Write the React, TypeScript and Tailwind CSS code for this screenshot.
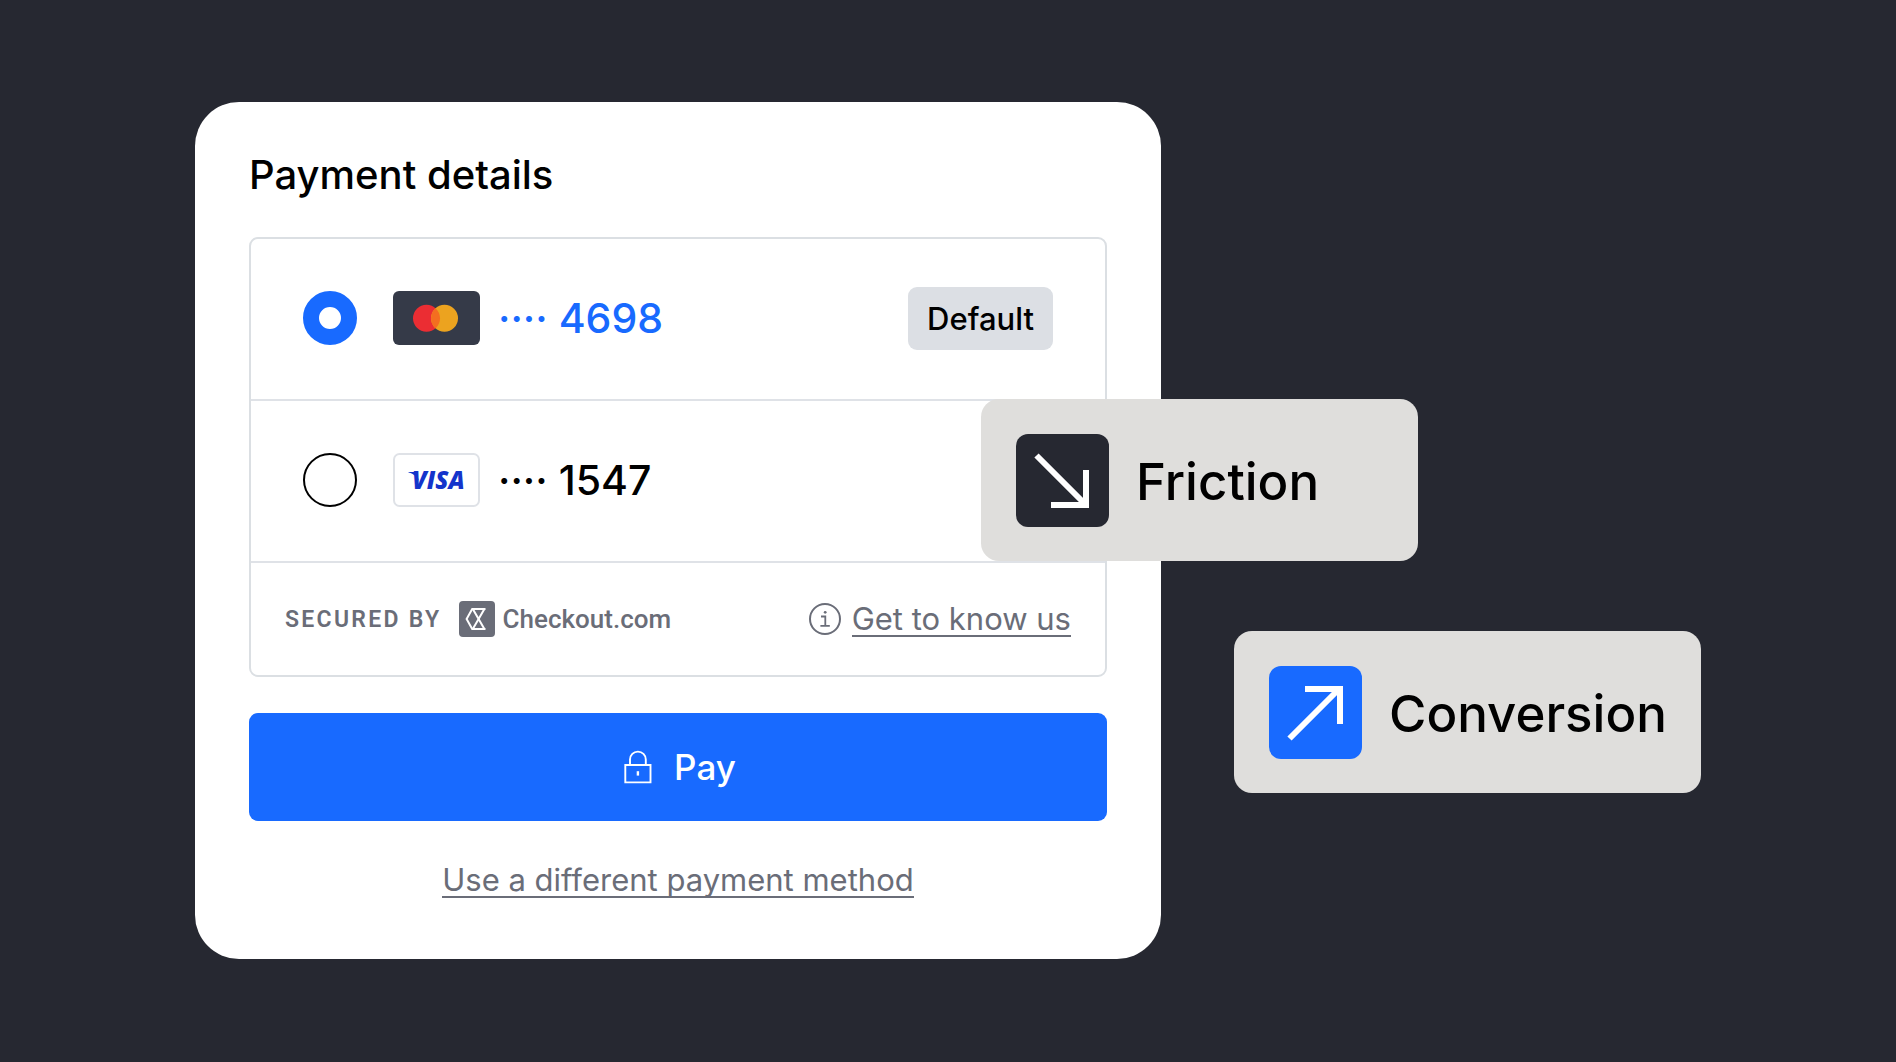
import { useState, type ReactNode } from 'react';

const CARDS = [
  { id: 'mastercard', last4: '4698', isDefault: true },
  { id: 'visa', last4: '1547', isDefault: false },
];

function MastercardLogo() {
  return (
    <svg viewBox="0 0 87 54" className="h-[54px] w-[87px]" role="img" aria-label="Mastercard">
      <rect width="87" height="54" rx="6" fill="#353a48" />
      <circle cx="33.5" cy="27.3" r="13.5" fill="#eb2d33" />
      <circle cx="51.5" cy="27.3" r="13.5" fill="#eca31f" />
      <path d="M42.5 17.2a13.5 13.5 0 0 1 0 20.2a13.5 13.5 0 0 1 0-20.2z" fill="#f46e20" />
    </svg>
  );
}

function VisaLogo() {
  return (
    <svg viewBox="0 0 87 54" className="h-[54px] w-[87px]">
      <rect x="1" y="1" width="85" height="52" rx="5.5" fill="#fff" stroke="#dfe2e7" strokeWidth="2" />
      <path d="M15.5 19H23l3 9c-2-4.5-5-7-10.5-8.5z" fill="#1434cb" />
      <text x="19" y="36" fill="#1434cb" className="font-['Open_Sans',sans-serif] text-[24px] font-extrabold italic">
        VISA
      </text>
    </svg>
  );
}

function CheckoutMark() {
  return (
    <svg viewBox="0 0 36 36" className="size-9" fill="none" aria-hidden="true">
      <rect width="36" height="36" rx="4" fill="#6a6d78" />
      <g stroke="#fff" strokeWidth="2">
        <path d="M26.5 8H13.2L7.6 18l5.6 10h13.3" />
        <path d="M13.8 8l11.6 20M13.8 28L25.4 8" />
      </g>
    </svg>
  );
}

function InfoIcon() {
  return (
    <svg viewBox="0 0 32 32" className="size-8" fill="none" stroke="currentColor" aria-hidden="true">
      <circle cx="16" cy="16" r="15" strokeWidth="2" />
      <path d="M12 13.5h4.3v9M11.4 22.8h9.4" strokeWidth="1.8" />
      <circle cx="16.2" cy="9.3" r="1.4" fill="currentColor" stroke="none" />
    </svg>
  );
}

function LockIcon() {
  return (
    <svg viewBox="0 0 28 34" className="h-[34px] w-7" fill="none" stroke="currentColor" strokeWidth="1.9" aria-hidden="true">
      <path d="M1.3 15h25.2v17.4H1.3zM6 15V9.5a7.8 7.8 0 0 1 15.8 0V15" />
      <path d="M13.9 21.2v4.4" strokeWidth="2.4" />
    </svg>
  );
}

function Tag({ className, tile, arrow, children }: { className: string; tile: string; arrow: string; children: ReactNode }) {
  return (
    <div className={`flex h-[162px] items-center gap-[27px] rounded-[18px] bg-[#dfdedc] pl-[35px] ${className}`}>
      <svg viewBox="0 0 93 93" className={`size-[93px] rounded-xl ${tile}`} fill="none" stroke="#fff" strokeWidth="6" aria-hidden="true">
        <path d={arrow} />
      </svg>
      <span className="pt-0.5 text-[51px] leading-none font-medium text-black">{children}</span>
    </div>
  );
}

export default function App() {
  const [selected, setSelected] = useState('mastercard');

  return (
    <main className="flex min-h-screen items-start justify-center bg-[#262831] py-[102px] font-['Inter',sans-serif]">
      <div className="flex w-full max-w-[1506px]">
        <section className="min-w-0 flex-1 rounded-[44px] bg-white px-[54px] pt-[48px] pb-[61px]">
          <h1 className="text-[40px] leading-[50px] font-medium text-black">Payment details</h1>

          <div className="mt-[37px] divide-y-2 divide-[#dfe2e7] rounded-[9px] border-2 border-[#dbdfe3]">
            {CARDS.map((card) => (
              <label key={card.id} className="flex h-[162px] items-center px-[52px] pb-0.5">
                <input
                  type="radio"
                  name="card"
                  checked={selected === card.id}
                  onChange={() => setSelected(card.id)}
                  className="size-[54px] shrink-0 appearance-none rounded-full border-2 border-black bg-white checked:border-[16px] checked:border-[#186aff]"
                />
                <span className="mr-[18px] ml-9">{card.id === 'visa' ? <VisaLogo /> : <MastercardLogo />}</span>
                <span className={`text-[41px] leading-[44px] font-medium ${selected === card.id ? 'text-[#186aff]' : 'text-black'}`}>
                  ···· {card.last4}
                </span>
                {card.isDefault && (
                  <span className="ml-auto rounded-[9px] bg-[#dcdfe4] px-[19px] py-3 text-[31px] leading-[39px] font-medium text-black">
                    Default
                  </span>
                )}
              </label>
            ))}
            <div className="flex h-[112px] items-center px-[34px] text-[#6a6d78]">
              <span className="font-['Roboto',sans-serif] text-[23px] leading-none font-semibold tracking-widest">SECURED BY</span>
              <span className="ml-[17px] flex items-center gap-2">
                <CheckoutMark />
                <span className="font-['Roboto',sans-serif] text-[26px] leading-none font-medium">Checkout.com</span>
              </span>
              <span className="ml-auto flex items-center gap-[11px]">
                <InfoIcon />
                <a href="#about" className="border-b-2 border-current text-[31px] leading-[33px]">
                  Get to know us
                </a>
              </span>
            </div>
          </div>

          <button
            type="button"
            className="mt-9 flex h-[108px] w-full items-center justify-center gap-[22px] rounded-[9px] bg-[#186aff] pl-1 text-[35px] font-medium text-white"
          >
            <LockIcon />
            Pay
          </button>

          <div className="mt-[42px] flex justify-center">
            <a href="#methods" className="border-b-2 border-current text-[31px] leading-[33px] text-[#6a6d78]">
              Use a different payment method
            </a>
          </div>
        </section>

        <div className="relative -ml-[180px] flex w-[720px] shrink-0 flex-col gap-[70px] pt-[297px]">
          <Tag className="w-[437px] self-start" tile="bg-[#262831]" arrow="M20.5 21.5L69 70M35 71h35V36">
            Friction
          </Tag>
          <Tag className="w-[467px] self-end" tile="bg-[#186aff]" arrow="M20.5 72.5L69 24M36 23h35v35">
            Conversion
          </Tag>
        </div>
      </div>
    </main>
  );
}
